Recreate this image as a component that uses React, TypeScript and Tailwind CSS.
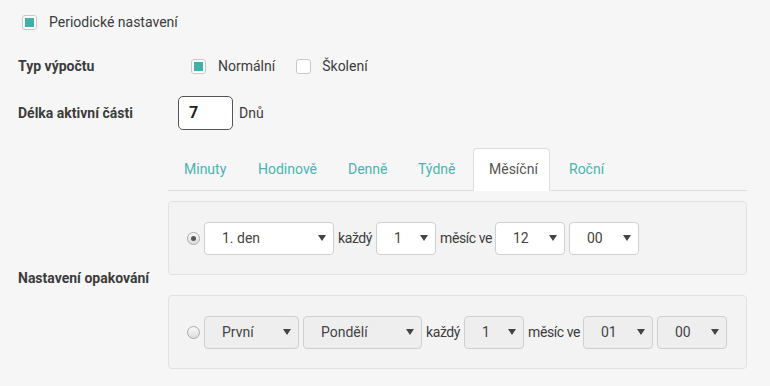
import React from "react";

const Caret = () => (
  <svg width="8" height="6" viewBox="0 0 8 6" className="shrink-0">
    <path d="M0 0 L8 0 L4 6 Z" fill="#444" />
  </svg>
);

function Select({ value, w, disabled }: { value: string; w: string; disabled?: boolean }) {
  return (
    <div
      className={`${w} shrink-0 h-[33px] flex items-center justify-between pl-[17px] pr-[7px] rounded border border-[#cfcfcf] ${
        disabled ? "bg-[#eeeeee]" : "bg-white"
      }`}
    >
      <span className="text-[14px] text-[#444]">{value}</span>
      <Caret />
    </div>
  );
}

function Check({ checked }: { checked?: boolean }) {
  return (
    <span className="w-[15px] h-[15px] rounded-[3px] border border-[#c8c8c8] bg-white flex items-center justify-center">
      {checked && <span className="w-[9px] h-[9px] bg-[#40b0a8]" />}
    </span>
  );
}

function Radio({ checked }: { checked?: boolean }) {
  return (
    <span className="w-[13px] h-[13px] rounded-full border border-[#aaa] bg-gradient-to-b from-[#fafafa] to-[#dcdcdc] flex items-center justify-center shrink-0">
      {checked && <span className="w-[5px] h-[5px] rounded-full bg-[#555]" />}
    </span>
  );
}

const Word = ({ children, w }: { children: string; w: string }) => (
  <span className={`${w} shrink-0 whitespace-nowrap tracking-[-0.4px]`}>{children}</span>
);

const tabs = ["Minuty", "Hodinově", "Denně", "Týdně", "Měsíční", "Roční"];
const tabPad: Record<string, string> = {
  Minuty: "w-[74px] pl-[16px]",
  Hodinově: "w-[90px] pl-[16px]",
  Denně: "w-[70px] pl-[16px]",
  Týdně: "w-[71px] pl-[16px]",
  Měsíční: "w-[77px] pl-[15px]",
  Roční: "pl-[19px]",
};

export default function App() {
  return (
    <div
      className="w-[770px] h-[386px] bg-[#f6f6f6] text-[#3c3c3c] text-[14px] overflow-hidden"
      style={{ fontFamily: "Roboto, 'Liberation Sans', sans-serif" }}
    >
      {/* periodic toggle */}
      <div className="flex items-center gap-[12px] pl-[22px] pt-[14px] h-[30px]">
        <Check checked />
        <span>Periodické nastavení</span>
      </div>

      {/* calc type */}
      <div className="flex items-center mt-[21px] h-[30px]">
        <span className="w-[191px] pl-[18px] font-bold">Typ výpočtu</span>
        <Check checked />
        <span className="ml-[12px]">Normální</span>
        <span className="ml-[21px]">
          <Check />
        </span>
        <span className="ml-[11px]">Školení</span>
      </div>

      {/* active length */}
      <div className="flex items-center mt-[15px] h-[34px]">
        <span className="w-[178px] pl-[18px] font-bold">Délka aktivní části</span>
        <div className="w-[55px] h-[34px] rounded-[5px] border border-[#555] bg-white flex items-center pl-[10px] font-bold text-[16px] text-[#222]">
          7
        </div>
        <span className="ml-[6px]">Dnů</span>
      </div>

      {/* repeat settings */}
      <div className="flex mt-[18px]">
        <div className="w-[168px] pl-[18px] flex items-center font-bold pt-[40px]">Nastavení opakování</div>
        <div className="w-[579px]">
          <div className="flex h-[43px] border-b border-[#dcdcdc]">
            {tabs.map((t) =>
              t === "Měsíční" ? (
                <div
                  key={t}
                  className={`${tabPad[t]} shrink-0 -mb-px bg-white border border-[#dcdcdc] border-b-white rounded-t-[4px] flex items-center text-[#555]`}
                >
                  {t}
                </div>
              ) : (
                <div key={t} className={`${tabPad[t]} shrink-0 flex items-center text-[#4ab3b3] whitespace-nowrap`}>
                  {t}
                </div>
              )
            )}
          </div>

          <div className="mt-[10px] h-[74px] rounded border border-[#e2e2e2] bg-[#f3f3f3] flex items-center pl-[18px] gap-[4px]">
            <Radio checked />
            <Select value="1. den" w="w-[130px]" />
            <Word w="w-[34px]">každý</Word>
            <Select value="1" w="w-[60px]" />
            <Word w="w-[51px]">měsíc ve</Word>
            <Select value="12" w="w-[70px]" />
            <Select value="00" w="w-[70px]" />
          </div>

          <div className="mt-[20px] h-[74px] rounded border border-[#e2e2e2] bg-[#f3f3f3] flex items-center pl-[18px] gap-[4px]">
            <Radio />
            <Select value="První" w="w-[95px]" disabled />
            <Select value="Pondělí" w="w-[119px]" disabled />
            <Word w="w-[34px]">každý</Word>
            <Select value="1" w="w-[60px]" disabled />
            <Word w="w-[51px]">měsíc ve</Word>
            <Select value="01" w="w-[70px]" disabled />
            <Select value="00" w="w-[70px]" disabled />
          </div>
        </div>
      </div>
    </div>
  );
}
